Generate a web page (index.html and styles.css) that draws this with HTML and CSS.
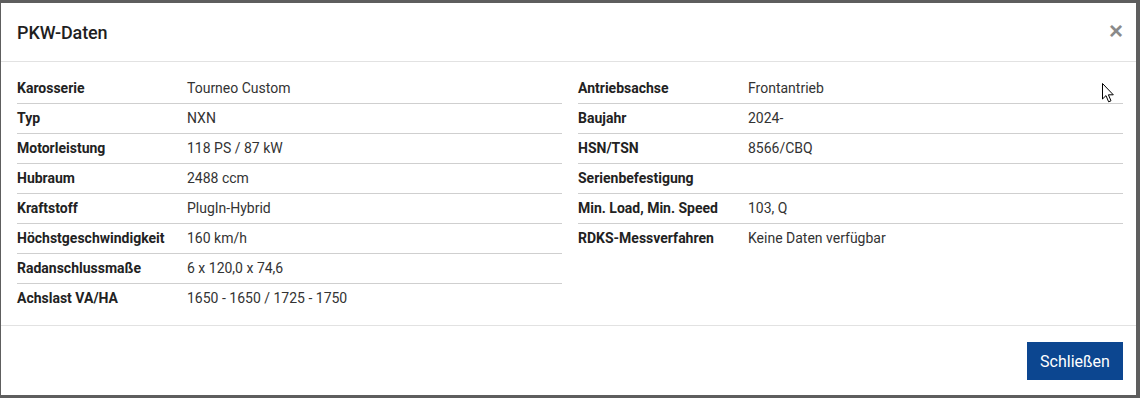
FILE: index.html
```html
<!DOCTYPE html>
<html lang="de">
<head>
<meta charset="utf-8">
<title>PKW-Daten</title>
<link rel="stylesheet" href="styles.css">
</head>
<body>
<div class="modal">
  <div class="modal-header">
    <h4 class="modal-title">PKW-Daten</h4>
    <button class="close" type="button" aria-label="Schließen">×</button>
  </div>
  <div class="modal-body">
    <table class="data">
      <tr><th>Karosserie</th><td>Tourneo Custom</td></tr>
      <tr><th>Typ</th><td>NXN</td></tr>
      <tr><th>Motorleistung</th><td>118 PS / 87 kW</td></tr>
      <tr><th>Hubraum</th><td>2488 ccm</td></tr>
      <tr><th>Kraftstoff</th><td>PlugIn-Hybrid</td></tr>
      <tr><th>Höchstgeschwindigkeit</th><td>160 km/h</td></tr>
      <tr><th>Radanschlussmaße</th><td>6 x 120,0 x 74,6</td></tr>
      <tr><th>Achslast VA/HA</th><td>1650 - 1650 / 1725 - 1750</td></tr>
    </table>
    <table class="data">
      <tr><th>Antriebsachse</th><td>Frontantrieb</td></tr>
      <tr><th>Baujahr</th><td>2024-</td></tr>
      <tr><th>HSN/TSN</th><td>8566/CBQ</td></tr>
      <tr><th>Serienbefestigung</th><td></td></tr>
      <tr><th>Min. Load, Min. Speed</th><td>103, Q</td></tr>
      <tr><th>RDKS-Messverfahren</th><td>Keine Daten verfügbar</td></tr>
    </table>
  </div>
  <div class="modal-footer">
    <button class="btn-primary" type="button">Schließen</button>
  </div>
  <svg class="cursor" width="14" height="22" viewBox="0 0 14 22" aria-hidden="true">
    <path d="M1.5 1.5 L1.5 17 L5 13.6 L7.6 19.8 L10 18.8 L7.4 12.8 L12.3 12.8 Z" fill="#fff" stroke="#000" stroke-width="1" stroke-linejoin="miter"/>
  </svg>
</div>
</body>
</html>
```

FILE: styles.css
```css
* { box-sizing: border-box; }
html, body { height: 100%; }
body {
  margin: 0;
  background: #5e5e5e;
  font-family: Roboto, "Liberation Sans", Arial, sans-serif;
  color: #222;
  padding: 3px 4px 3px 1px;
}
.modal {
  position: relative;
  background: #fff;
  height: 392px;
  display: flex;
  flex-direction: column;
}
.modal-header {
  height: 59px;
  border-bottom: 1px solid #e2e2e2;
  display: flex;
  align-items: center;
  justify-content: space-between;
  padding: 0 13px 0 16px;
}
.modal-title {
  margin: 0;
  font-size: 18px;
  font-weight: 500;
  color: #1f1f1f;
  letter-spacing: -0.1px;
}
.close {
  border: 0;
  background: none;
  padding: 0;
  font-family: "Liberation Sans", Arial, sans-serif;
  font-size: 24px;
  font-weight: 700;
  color: #8a8a8a;
  line-height: 1;
  margin-top: -2px;
}
.modal-body {
  padding: 12px 13px 11px 16px;
  display: flex;
  gap: 16px;
  align-items: flex-start;
  height: 264px;
  border-bottom: 1px solid #e2e2e2;
}
.data {
  width: 545px;
  border-collapse: separate;
  border-spacing: 0;
  font-size: 14px;
}
.data th, .data td {
  height: 30px;
  padding: 0 0 1px 0;
  text-align: left;
  vertical-align: middle;
  line-height: 17px;
  border-bottom: 1px solid #cfcfcf;
}
.data tr:last-child th, .data tr:last-child td { border-bottom: 0; }
.data th {
  width: 170px;
  font-weight: 700;
  color: #222;
}
.data td {
  font-weight: 400;
  color: #333;
}
.modal-footer {
  flex: 1;
  display: flex;
  justify-content: flex-end;
  align-items: flex-start;
  padding: 16px 13px 0 0;
}
.btn-primary {
  width: 96px;
  height: 38px;
  border: 0;
  background: #0c4690;
  color: #fff;
  font-family: Roboto, "Liberation Sans", Arial, sans-serif;
  font-size: 16px;
  font-weight: 400;
  padding: 0;
}
.cursor {
  position: absolute;
  left: 1100px;
  top: 79px;
}
```
